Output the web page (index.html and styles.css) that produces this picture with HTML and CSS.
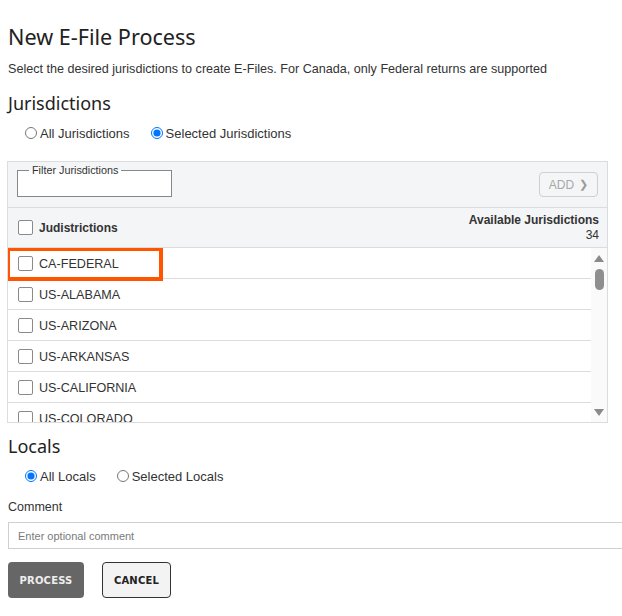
FILE: index.html
```html
<!DOCTYPE html>
<html>
<head>
<meta charset="utf-8">
<link rel="stylesheet" href="styles.css">
</head>
<body>
<div class="page">
  <h1 class="title">New E-File Process</h1>
  <p class="desc">Select the desired jurisdictions to create E-Files. For Canada, only Federal returns are supported</p>
  <h2 class="section">Jurisdictions</h2>
  <div class="radios">
    <label class="radio"><input type="radio" name="jur"> All Jurisdictions</label>
    <label class="radio"><input type="radio" name="jur" checked> Selected Jurisdictions</label>
  </div>

  <div class="table">
    <div class="toolbar">
      <fieldset class="filter"><legend>Filter Jurisdictions</legend></fieldset>
      <button class="add">ADD <span class="chev">&#x276F;</span></button>
    </div>
    <div class="thead">
      <div class="th-left"><span class="cb"></span><span class="th-label">Judistrictions</span></div>
      <div class="th-right"><div class="avail">Available Jurisdictions</div><div class="count">34</div></div>
    </div>
    <div class="body">
      <div class="rows">
        <div class="row first"><span class="cb"></span><span>CA-FEDERAL</span><div class="highlight"></div></div>
        <div class="row"><span class="cb"></span><span>US-ALABAMA</span></div>
        <div class="row"><span class="cb"></span><span>US-ARIZONA</span></div>
        <div class="row"><span class="cb"></span><span>US-ARKANSAS</span></div>
        <div class="row"><span class="cb"></span><span>US-CALIFORNIA</span></div>
        <div class="row"><span class="cb"></span><span>US-COLORADO</span></div>
      </div>
      <div class="scrollbar">
        <svg class="arrow" width="10" height="7" viewBox="0 0 10 7"><path d="M5 0 L10 7 L0 7 Z" fill="#8a8a8a"/></svg>
        <div class="thumb"></div>
        <div class="track"></div>
        <svg class="arrow" width="10" height="7" viewBox="0 0 10 7"><path d="M0 0 L10 0 L5 7 Z" fill="#8a8a8a"/></svg>
      </div>
    </div>
  </div>

  <h2 class="section locals">Locals</h2>
  <div class="radios locals-radios">
    <label class="radio"><input type="radio" name="loc" checked> All Locals</label>
    <label class="radio"><input type="radio" name="loc"> Selected Locals</label>
  </div>
  <div class="comment-label">Comment</div>
  <input class="comment" type="text" placeholder="Enter optional comment">
  <div class="actions">
    <button class="btn process">PROCESS</button>
    <button class="btn cancel">CANCEL</button>
  </div>
</div>
</body>
</html>
```

FILE: styles.css
```css
html, body {
  margin: 0;
  padding: 0;
  background: #fff;
  overflow: hidden;
}
body {
  font-family: "Liberation Sans", Arial, sans-serif;
  color: #333;
}
.page {
  padding: 0 0 0 8px;
  display: flex;
  flex-direction: column;
  align-items: flex-start;
}
.title {
  font-family: "Noto Sans", "Open Sans", sans-serif;
  font-weight: 400;
  font-size: 21.6px;
  line-height: 26px;
  margin: 24px 0 0 0;
  color: #222;
}
.desc {
  font-size: 12.6px;
  line-height: 16px;
  margin: 11px 0 0 0;
  color: #333;
}
.section {
  font-family: "Noto Sans", "Open Sans", sans-serif;
  font-weight: 400;
  font-size: 18px;
  line-height: 24px;
  margin: 14px 0 0 0;
  color: #222;
}
.section.locals {
  margin-top: 11px;
}
.radios {
  display: flex;
  gap: 21px;
  margin: 9px 0 0 17px;
  height: 18px;
  align-items: center;
}
.locals-radios {
  margin-top: 9px;
}
.radio {
  font-size: 13px;
  display: flex;
  align-items: center;
  gap: 0;
  color: #333;
}
.radio input {
  margin: 0 3px 0 0;
  width: 12px;
  height: 12px;
}
.table {
  margin: 19px 0 0 -1px;
  width: 599px;
  border: 1px solid #dcdcdc;
}
.toolbar {
  background: #f4f5f7;
  height: 45px;
  display: flex;
  align-items: flex-start;
  justify-content: space-between;
  padding: 0 9px 0 9px;
  border-bottom: 1px solid #dcdcdc;
}
.filter {
  margin: 3px 0 0 0;
  width: 155px;
  height: 32px;
  box-sizing: border-box;
  border: 1px solid #888;
  padding: 0;
  background: #fff;
}
.filter legend {
  font-size: 10.8px;
  color: #333;
  padding: 0 3px;
  margin-left: 11px;
  line-height: 11px;
}
.add {
  margin-top: 10px;
  width: 59px;
  height: 25px;
  border: 1px solid #cfcfcf;
  border-radius: 4px;
  background: #f4f5f7;
  color: #a8a8a8;
  font-family: "Liberation Sans", Arial, sans-serif;
  font-size: 12px;
  padding: 0;
  display: flex;
  align-items: center;
  justify-content: center;
  gap: 5px;
}
.chev {
  font-size: 11px;
  color: #9a9a9a;
}
.thead {
  background: #f4f5f7;
  height: 39px;
  display: flex;
  align-items: center;
  justify-content: space-between;
  padding: 0 8px 0 10px;
  border-bottom: 1px solid #dcdcdc;
}
.th-left {
  display: flex;
  align-items: center;
  gap: 6px;
}
.th-label {
  font-weight: bold;
  font-size: 12px;
  color: #333;
}
.th-right {
  text-align: right;
  font-size: 12px;
  line-height: 15px;
  color: #333;
  margin-top: 1px;
}
.avail {
  font-weight: bold;
}
.cb {
  display: inline-block;
  width: 13px;
  height: 13px;
  border: 1px solid #8a8a8a;
  border-radius: 2px;
  background: #fff;
  box-sizing: content-box;
}
.body {
  display: flex;
  height: 174px;
  overflow: hidden;
}
.rows {
  flex: 1;
  display: flex;
  flex-direction: column;
}
.row {
  flex: none;
  height: 29px;
  padding-top: 1px;
  border-bottom: 1px solid #dcdcdc;
  display: flex;
  align-items: center;
  gap: 6px;
  padding-left: 10px;
  font-size: 12.6px;
  color: #333;
  position: relative;
}
.highlight {
  position: absolute;
  left: -2px;
  top: -1px;
  width: 149px;
  height: 26px;
  border: 4px solid #ff5500;
  pointer-events: none;
}
.scrollbar {
  width: 16px;
  flex: none;
  background: #fafafa;
  display: flex;
  flex-direction: column;
  align-items: center;
  padding: 7px 0 6px 0;
  box-sizing: border-box;
}
.arrow {
  flex: none;
}
.thumb {
  width: 9px;
  height: 21px;
  border-radius: 5px;
  background: #8e8e8e;
  margin-top: 7px;
}
.track {
  flex: 1;
}
.comment-label {
  font-size: 12.5px;
  line-height: 16px;
  margin-top: 14px;
  color: #333;
}
.comment {
  margin: 7px 0 0 0;
  width: 630px;
  height: 27px;
  box-sizing: border-box;
  border: 1px solid #cfcfcf;
  padding: 0 9px;
  font-family: "Liberation Sans", Arial, sans-serif;
  font-size: 11px;
  outline: none;
}
.comment::placeholder {
  color: #7a7a7a;
}
.actions {
  display: flex;
  gap: 18px;
  margin-top: 13px;
}
.btn {
  height: 36px;
  border-radius: 4px;
  font-family: "DejaVu Sans", Verdana, sans-serif;
  font-weight: bold;
  font-size: 10px;
  padding: 0;
  letter-spacing: 0.2px;
}
.process {
  width: 76px;
  background: #666;
  color: #eee;
  border: none;
}
.cancel {
  width: 69px;
  background: #f3f3f3;
  color: #222;
  border: 1px solid #333;
}
```
